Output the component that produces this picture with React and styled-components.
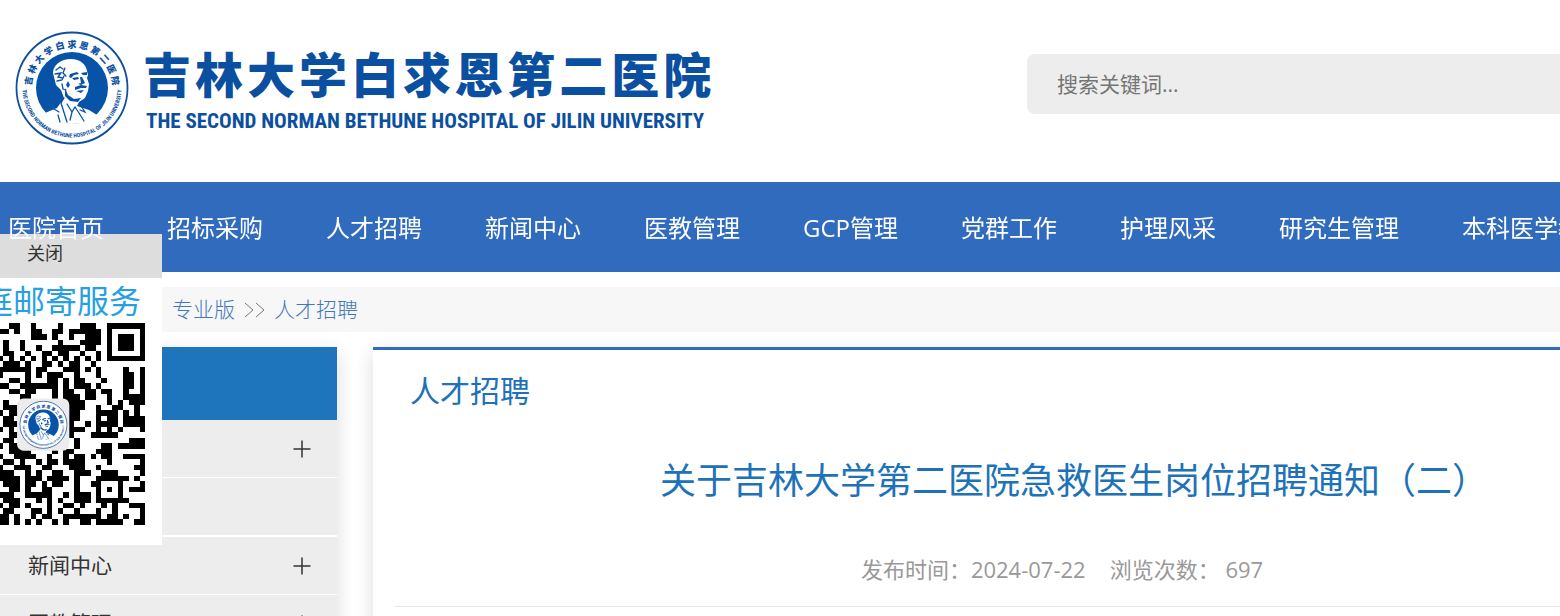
import { useState } from "react";

import styled, { createGlobalStyle, css } from "styled-components";

const GlobalStyle = createGlobalStyle`
  * {
    box-sizing: border-box;
  }

  body {
    margin: 0;
    overflow-x: hidden;
    background: #fff;
    color: #333;
    font-family: "Open Sans", "Noto Sans CJK SC", sans-serif;
  }

  a {
    color: inherit;
    text-decoration: none;
  }
`;

const Page = styled.div`
  min-width: 1775px;
`;

const Header = styled.header`
  height: 182px;
  display: flex;
  align-items: flex-start;
  justify-content: space-between;
  padding: 31px 0 0 15px;
`;

const Brand = styled.a`
  display: flex;
  gap: 14px;
  color: #0b50a0;
`;

const BrandText = styled.div`
  padding-top: 14px;
`;

const BrandName = styled.div`
  display: flex;
  gap: 4px;
  font-size: 48px;
  font-weight: 900;
  line-height: 60px;
`;

const BrandSub = styled.div`
  font-family: "Roboto Condensed", "Liberation Sans Narrow", sans-serif;
  font-size: 21px;
  font-weight: 700;
  line-height: 32px;
  white-space: nowrap;
  padding-left: 3px;
`;

const SearchInput = styled.input`
  width: 748px;
  height: 60px;
  margin-top: 23px;
  padding: 0 30px;
  border: none;
  border-radius: 8px 0 0 8px;
  outline: none;
  background: #ededed;
  font-family: inherit;
  font-size: 21px;

  &::placeholder {
    color: #757575;
  }
`;

const Nav = styled.nav`
  height: 90px;
  display: flex;
  align-items: center;
  gap: 63px;
  padding: 2px 8px 0;
  background: #316bbe;
`;

const NavLink = styled.a`
  position: relative;
  z-index: 2;
  color: #fff;
  font-size: 24px;
  line-height: 36px;
  white-space: nowrap;
`;

const Breadcrumb = styled.div`
  display: flex;
  align-items: center;
  gap: 9px;
  height: 45px;
  margin: 15px 0;
  padding: 0 0 4px 172px;
  background: #f7f7f7;
  color: #4377bd;
  font-size: 21px;
  font-weight: 300;

  svg {
    margin-top: 4px;
  }
`;

const Columns = styled.div`
  display: flex;
  align-items: flex-start;
  gap: 36px;
`;

const Sidebar = styled.aside`
  width: 337px;
  background: #fff;
  box-shadow: 0 6px 18px rgba(0, 0, 0, 0.14);
`;

const SidebarHead = styled.div`
  height: 73px;
  background: #1f75bc;
`;

const SidebarItem = styled.div`
  display: flex;
  align-items: center;
  justify-content: space-between;
  padding: 0 26px 0 28px;
  background: #ededed;
  background-clip: padding-box;
  border-bottom: 1px solid #fff;
  font-size: 21px;
  line-height: 57px;
  ${(props) =>
    props.$last &&
    css`
      border-bottom-width: 2px;
    `}
`;

const ToggleButton = styled.button`
  display: flex;
  padding: 0;
  border: none;
  background: none;
  color: #333;
  cursor: pointer;
`;

const Article = styled.main`
  flex: 1;
  padding: 0 22px 40px;
  border-top: 3px solid #316bbe;
  background: #fff;
  box-shadow: 0 6px 18px rgba(0, 0, 0, 0.14);
  color: #2072b8;
`;

const SectionTitle = styled.h2`
  margin: 0;
  padding: 17px 15px 0;
  font-size: 30px;
  font-weight: 400;
  line-height: 48px;
`;

const ArticleTitle = styled.h1`
  margin: 38px 0 0;
  font-size: 36px;
  font-weight: 400;
  line-height: 56px;
  text-align: center;
`;

const Meta = styled.div`
  padding: 44px 0 21px;
  border-bottom: 1px solid #e6e6e6;
  color: #999;
  font-size: 22px;
  line-height: 32px;
  text-align: center;
`;

const MetaItem = styled.span`
  margin-right: 24px;
`;

const Popup = styled.div`
  position: fixed;
  z-index: 1;
  top: 234px;
  left: 0;
  width: 162px;
  overflow: hidden;
  background: #fff;
`;

const CloseButton = styled.button`
  display: block;
  width: 100%;
  height: 44px;
  padding: 0 27px 8px;
  border: none;
  background: #ddd;
  color: #333;
  font-family: inherit;
  font-size: 18px;
  text-align: left;
  cursor: pointer;
`;

const PopupTitle = styled.div`
  display: flex;
  justify-content: flex-end;
  padding-right: 21px;
  color: #279fe3;
  font-size: 32px;
  line-height: 45px;
  white-space: nowrap;
`;

const CodeWrap = styled.div`
  display: flex;
  justify-content: flex-end;
  padding: 0 17px 20px 0;

  svg {
    flex: none;
  }
`;

const navItems = [
  "医院首页",
  "招标采购",
  "人才招聘",
  "新闻中心",
  "医教管理",
  "GCP管理",
  "党群工作",
  "护理风采",
  "研究生管理",
  "本科医学教育",
];

const sidebarItems = [
  { label: "医院概况", open: true },
  { label: "人才招聘", open: false },
  { label: "新闻中心", open: true },
  { label: "医教管理", open: true },
];

const codeRows = [
  "..XX..X....X...XXX..XXXXXXX",
  "XX.X..XX..XX.XXXXXX.X.....X",
  "......XXX.X..X..XXX.X.XXX.X",
  ".X..X......X...XXXX.X.XXX.X",
  ".X..X..X..XXXXX.XX..X.XXX.X",
  ".XX..X..XX.XX..X..X.X.....X",
  "X.X.X.X.X.X.X.X.X.X.XXXXXXX",
  ".XXX.X..XX.X.XX..X.........",
  "XXXXXX.XX...XXX.X.X....X..X",
  "X....X.X.XXX..X...X....XX.X",
  "..XX.X...XX.X.XX...X...XX.X",
  "XX..XXXXXXX.X.XXX.X....XX.X",
  "..XX.XX...X.XX..XX.XX..X..X",
  "....XX....X.XXX.XX..X..XXXX",
  ".X..........XXXX....X.X.XXX",
  ".XXX.........XXX..X..XX..X.",
  "X.XX.........XX...XXXX.X.X.",
  ".XX.........XXX...X.XX.XXXX",
  ".XXX.........X..X.XXXX.XXXX",
  "X.X..........XXX..X.X.X...X",
  "..XX.........X...XXXXX.....",
  ".XX...........X.........XXX",
  "X.XX..........X....XX.XXXXX",
  "..XXXX....X.XX....XXX......",
  "X..XXXX..X..X.XX.X.XX..XXXX",
  ".XX.X..X.XX.XXXX....X.....X",
  "X..XXX..XX...XXX..X......XX",
  "XXX..X.X..XX..XXX..XXX....X",
  "XXXX.XXX.XXXX.X...XXXXXX.X.",
  ".XXX.XX.X.XX..X..XX...X...X",
  "..XX.X..XX....X...X.X.X.XXX",
  "XXX..XXXXX..X.XXX.X...X....",
  ".XXX...X.X.X..XXX.XXXXXX...",
  "X.XX.X...X..XX.X...X.X..XXX",
  ".XX...XX.X.X..X...X..X....X",
  "XX.X..X.XX..XXXXXXX.XX.X..X",
  "XX.X.X.X..X.X..XX.XXXXX..XX",
];

const Seal = ({ size, id }) => (
  <svg width={size} height={size} viewBox="0 0 114 114" aria-hidden="true">
    <defs>
      <path id={`${id}-top`} d="M16.500 57a40.500 40.500 0 0 1 81 0" />
      <path id={`${id}-bottom`} d="M7.500 57a49.500 49.500 0 0 0 99 0" />
    </defs>
    <circle cx="57" cy="57" r="55.500" fill="#fff" stroke="#0d50a2" strokeWidth="1.800" />
    <circle cx="57" cy="57" r="36" fill="#0753a8" />
    <text fill="#0d50a2" fontSize="9" fontWeight="900">
      <textPath href={`#${id}-top`} startOffset="50%" textAnchor="middle">
        吉 林 大 学 白 求 恩 第 二 医 院
      </textPath>
    </text>
    <text fill="#0d50a2" fontFamily="Roboto Condensed" fontSize="5.700" fontWeight="700">
      <textPath href={`#${id}-bottom`} startOffset="50%" textAnchor="middle">
        THE SECOND NORMAN BETHUNE HOSPITAL OF JILIN UNIVERSITY
      </textPath>
    </text>
    <path
      fill="#fff"
      d="M38 42c0-8 8-14 18-14 9 0 15 5 16 12l1 4-1 3 2 6-1 7-3 7-6 4-2 4 12 4 8 5c-6 6-14 9-25 9-12 0-21-4-27-11l12-5 7-10-3-8-5-5z"
    />
    <g fill="none" stroke="#0753a8" strokeWidth="1.300" strokeLinecap="round">
      <path d="M41 39l4-3 3 2M40 43l6-1-3 4 5 1M42 50l5-1 2-4M47 53l1 5 3 1M50 37l-2 5 3 3" />
      <path d="M49 67l-9 8M49 67l-3 5 6 19M44 81l-5-3M43 84l2 7M52 73l5 8 3-5 4 6 5 8M66 75l4 6-5-2M57 81l-2 8" />
    </g>
    <g fill="#0753a8">
      <path d="M55 43l7-2 2 2-5 1-3 3-2-1zM66 42l6-1 0 3-4 0z" />
      <path d="M57 47l6-1 1 2-5 1zM65 46l2 0 3 6-4 2-3-1 3-1z" />
      <path d="M60 56l6-2 6 1-1 2-5 0-6 2zM61 60l8-1-3 3z" />
      <path d="M50 57l3 7 6 4 7-1-3 4-8-1-5-5zM53 50l2 4-2 3-2-3z" />
    </g>
  </svg>
);

const QrCode = () => (
  <svg width="147" height="202" viewBox="0 0 27 37" role="img" aria-label="二维码">
    {codeRows.map((row, y) => (
      <path
        key={y}
        d={[...row]
          .map((cell, x) => (cell === "X" ? `M${x} ${y}h1v1h-1z` : ""))
          .join("")}
        shapeRendering="crispEdges"
      />
    ))}
    <rect x="3.500" y="13.800" width="9.600" height="9.600" rx="1.200" fill="#ececec" />
    <g transform="translate(3.900 14.200) scale(0.078)">
      <Seal size={114} id="code-seal" />
    </g>
  </svg>
);

const App = () => {
  const [showPopup, setShowPopup] = useState(true);

  return (
    <>
      <GlobalStyle />
      <Page>
        <Header>
          <Brand href="#">
            <Seal size={114} id="seal" />
            <BrandText>
              <BrandName>
                {[..."吉林大学白求恩第二医院"].map((char) => (
                  <span key={char}>{char}</span>
                ))}
              </BrandName>
              <BrandSub>
                THE SECOND NORMAN BETHUNE HOSPITAL OF JILIN UNIVERSITY
              </BrandSub>
            </BrandText>
          </Brand>
          <SearchInput
            type="search"
            aria-label="搜索关键词"
            placeholder="搜索关键词..."
          />
        </Header>

        <Nav>
          {navItems.map((item) => (
            <NavLink href="#" key={item}>
              {item}
            </NavLink>
          ))}
        </Nav>

        <Breadcrumb>
          <a href="#">专业版</a>
          <svg width="21" height="16" fill="none" stroke="#777" aria-hidden="true">
            <path d="M1 1l8 7-8 7M12 1l8 7-8 7" />
          </svg>
          <a href="#">人才招聘</a>
        </Breadcrumb>

        <Columns>
          <Sidebar>
            <SidebarHead />
            {sidebarItems.map(({ label, open }) => (
              <SidebarItem key={label} $last={!open}>
                <a href="#">{label}</a>
                {open && (
                  <ToggleButton aria-label={`展开${label}`}>
                    <svg width="18" height="18" stroke="currentColor" strokeWidth="1.500">
                      <path d="M9 0.500v17M0.500 9h17" />
                    </svg>
                  </ToggleButton>
                )}
              </SidebarItem>
            ))}
          </Sidebar>

          <Article>
            <SectionTitle>人才招聘</SectionTitle>
            <ArticleTitle>
              关于吉林大学第二医院急救医生岗位招聘通知（二）
            </ArticleTitle>
            <Meta>
              <MetaItem>发布时间：2024-07-22</MetaItem>
              <MetaItem>浏览次数： 697</MetaItem>
            </Meta>
          </Article>
        </Columns>
      </Page>

      {showPopup && (
        <Popup>
          <CloseButton onClick={() => setShowPopup(false)}>关闭</CloseButton>
          <PopupTitle>家庭邮寄服务</PopupTitle>
          <CodeWrap>
            <QrCode />
          </CodeWrap>
        </Popup>
      )}
    </>
  );
};

export default App;
